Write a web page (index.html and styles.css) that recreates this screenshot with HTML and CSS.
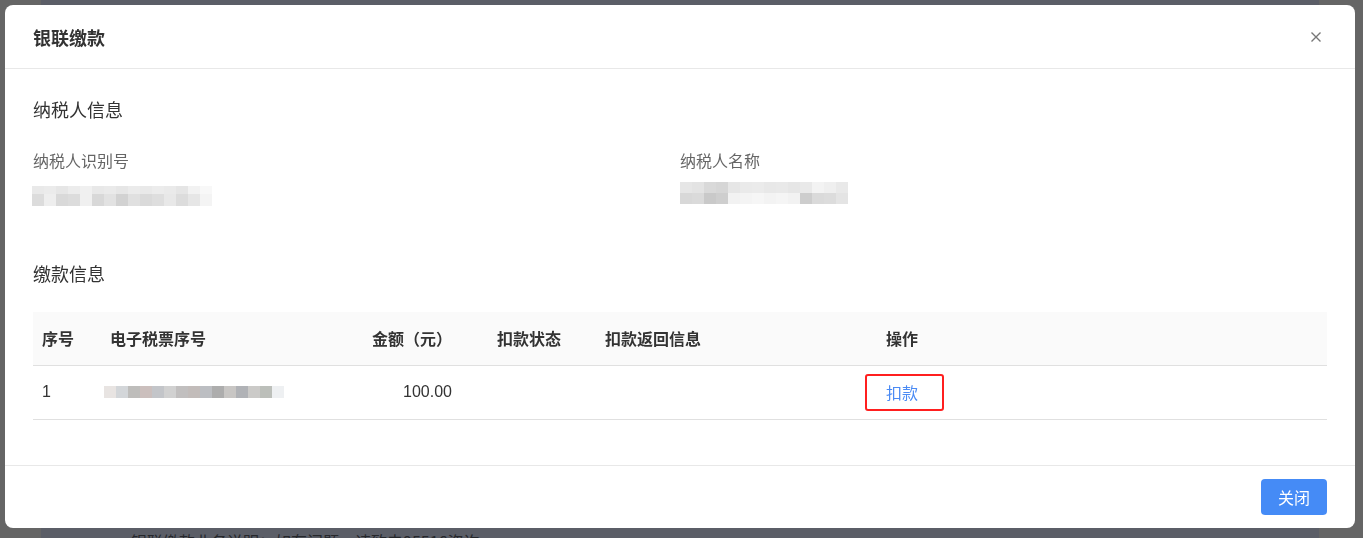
FILE: index.html
```html
<!DOCTYPE html>
<html lang="zh-CN">
<head>
<meta charset="utf-8">
<title>银联缴款</title>
<link rel="stylesheet" href="styles.css">
</head>
<body>
<div class="page-bg">
  <p class="bg-text"><span class="dot">•</span>银联缴款业务说明：如有问题，请致电95516咨询</p>
</div>
<div class="modal">
  <div class="modal-header">
    <h2 class="modal-title">银联缴款</h2>
    <button class="close-btn" aria-label="关闭">
      <svg width="10" height="10" viewBox="0 0 10 10"><path d="M0.5 0.5 L9.5 9.5 M9.5 0.5 L0.5 9.5" stroke="#777" stroke-width="1.4" fill="none"/></svg>
    </button>
  </div>
  <div class="modal-body">
    <h3 class="section-title">纳税人信息</h3>
    <div class="info-grid">
      <div class="field">
        <div class="label">纳税人识别号</div>
        <div class="mask mask-id"></div>
      </div>
      <div class="field">
        <div class="label">纳税人名称</div>
        <div class="mask mask-name"></div>
      </div>
    </div>
    <h3 class="section-title section-pay">缴款信息</h3>
    <table class="pay-table">
      <colgroup>
        <col class="c1"><col class="c2"><col class="c3"><col class="c4"><col class="c5"><col class="c6">
      </colgroup>
      <thead>
        <tr>
          <th>序号</th>
          <th>电子税票序号</th>
          <th class="num">金额（元）</th>
          <th>扣款状态</th>
          <th>扣款返回信息</th>
          <th>操作</th>
        </tr>
      </thead>
      <tbody>
        <tr>
          <td>1</td>
          <td><span class="mask mask-ticket"></span></td>
          <td class="num">100.00</td>
          <td></td>
          <td></td>
          <td><a class="action-link" href="#">扣款</a></td>
        </tr>
      </tbody>
    </table>
  </div>
  <div class="modal-footer">
    <button class="btn-primary">关闭</button>
  </div>
</div>
</body>
</html>
```

FILE: styles.css
```css
* { box-sizing: border-box; }
html, body {
  margin: 0;
  height: 538px;
  overflow: hidden;
}
body {
  background: #656565;
  font-family: "Noto Sans CJK SC", "Liberation Sans", sans-serif;
  color: #333;
}
.page-bg {
  margin-left: 41px;
  width: 1278px;
  height: 538px;
  padding-top: 530px;
  background: #5b5e67;
}
.bg-text {
  margin: 0 0 0 62px;
  font-size: 16px;
  line-height: 22px;
  color: #26282c;
}
.dot { margin-right: 12px; }

.modal {
  position: fixed;
  top: 5px;
  left: 5px;
  width: 1350px;
  background: #fff;
  border-radius: 8px;
  overflow: hidden;
}
.modal-header {
  height: 64px;
  padding: 0 28px;
  display: flex;
  align-items: center;
  justify-content: space-between;
  border-bottom: 1px solid #e8e8e8;
}
.modal-title {
  margin: 0;
  font-size: 18px;
  font-weight: 700;
  line-height: 24px;
  color: #333;
}
.close-btn {
  border: 0;
  background: none;
  padding: 0;
  margin-right: 6px;
  width: 10px;
  height: 10px;
  display: flex;
  cursor: pointer;
}
.modal-body {
  padding: 28px 28px 45px;
}
.section-title {
  margin: 0;
  font-size: 18px;
  font-weight: 400;
  line-height: 24px;
  color: #333;
}
.section-pay { margin-top: 55px; }
.info-grid {
  margin-top: 28px;
  display: grid;
  grid-template-columns: 647px 647px;
}
.label {
  font-size: 16px;
  line-height: 22px;
  color: #666;
}
.mask { display: block; }
.mask-id {
  width: 180px;
  height: 20px;
  margin-top: 15px;
  margin-left: -1px;
  background:
    linear-gradient(90deg,
      #e9e9e9 0 12px, #ebebeb 12px 24px, #e6e6e6 24px 36px, #ececec 36px 48px,
      #f0f0f0 48px 60px, #e8e8e8 60px 72px, #eaeaea 72px 84px, #e6e6e6 84px 96px,
      #ebebeb 96px 108px, #e9e9e9 108px 120px, #ececec 120px 132px, #eaeaea 132px 144px,
      #e5e5e5 144px 156px, #f2f2f2 156px 168px, #f8f8f8 168px 180px) top / 180px 8px no-repeat,
    linear-gradient(90deg,
      #dcdcdc 0 12px, #eeeeee 12px 24px, #d9d9d9 24px 36px, #dcdcdc 36px 48px,
      #f0f0f0 48px 60px, #d8d8d8 60px 72px, #e2e2e2 72px 84px, #d2d2d2 84px 96px,
      #e0e0e0 96px 108px, #dadada 108px 120px, #dedede 120px 132px, #e8e8e8 132px 144px,
      #dcdcdc 144px 156px, #e6e6e6 156px 168px, #f4f4f4 168px 180px) bottom / 180px 12px no-repeat;
}
.mask-name {
  width: 168px;
  height: 22px;
  margin-top: 11px;
  background:
    linear-gradient(90deg,
      #e6e6e6 0 12px, #e3e3e3 12px 24px, #d9d9d9 24px 36px, #d6d6d6 36px 48px,
      #e6e6e6 48px 60px, #eaeaea 60px 72px, #ebebeb 72px 84px, #e8e8e8 84px 96px,
      #e9e9e9 96px 108px, #e6e6e6 108px 120px, #e9e9e9 120px 132px, #f3f3f3 132px 144px,
      #efefef 144px 156px, #e9e9e9 156px 168px) top / 168px 11px no-repeat,
    linear-gradient(90deg,
      #d8d8d8 0 12px, #dadada 12px 24px, #c9c9c9 24px 36px, #cecece 36px 48px,
      #f2f2f2 48px 60px, #f4f4f4 60px 72px, #f6f6f6 72px 84px, #f3f3f3 84px 96px,
      #f5f5f5 96px 108px, #f2f2f2 108px 120px, #cdcdcd 120px 132px, #dadada 132px 144px,
      #dcdcdc 144px 156px, #e4e4e4 156px 168px) bottom / 168px 11px no-repeat;
}
.pay-table {
  margin-top: 27px;
  width: 1294px;
  border-collapse: collapse;
  table-layout: fixed;
  font-size: 16px;
}
.c1 { width: 68px; }
.c2 { width: 239px; }
.c3 { width: 148px; }
.c4 { width: 108px; }
.c5 { width: 281px; }
.c6 { width: 450px; }
.pay-table th,
.pay-table td {
  height: 53px;
  padding: 0 9px;
  text-align: left;
  vertical-align: middle;
  border-bottom: 1px solid #e0e0e0;
  line-height: 22px;
}
.pay-table td { height: 54px; }
.pay-table th {
  background: #fafafa;
  font-weight: 700;
  color: #333;
}
.pay-table td {
  color: #333;
  font-family: "Liberation Sans", "Noto Sans CJK SC", sans-serif;
}
.pay-table .num {
  text-align: right;
  padding-right: 36px;
}
.mask-ticket {
  width: 180px;
  height: 12px;
  margin-left: -6px;
  background: linear-gradient(90deg,
    #e8e4e2 0 12px, #d3d6d9 12px 24px, #bebdbb 24px 36px, #cbbfbd 36px 48px,
    #c3c5c9 48px 60px, #d1d1d1 60px 72px, #c1bfbf 72px 84px, #c2bcba 84px 96px,
    #bcbec2 96px 108px, #adadad 108px 120px, #c8c6c4 120px 132px, #b0b2b6 132px 144px,
    #cbcac8 144px 156px, #bcbfba 156px 168px, #eef0f2 168px 180px);
}
.action-link {
  display: inline-block;
  margin-left: -21px;
  padding: 0 24px 0 19px;
  line-height: 33px;
  border: 2px solid #ff1f1f;
  border-radius: 3px;
  color: #4a8af4;
  text-decoration: none;
  font-family: "Noto Sans CJK SC", sans-serif;
}
.modal-footer {
  border-top: 1px solid #e8e8e8;
  padding: 13px 28px 13px;
  display: flex;
  justify-content: flex-end;
}
.btn-primary {
  height: 36px;
  padding: 0 17px;
  border: 0;
  border-radius: 4px;
  background: #458bf6;
  color: #fff;
  font-family: "Noto Sans CJK SC", sans-serif;
  font-size: 16px;
  cursor: pointer;
}
```
